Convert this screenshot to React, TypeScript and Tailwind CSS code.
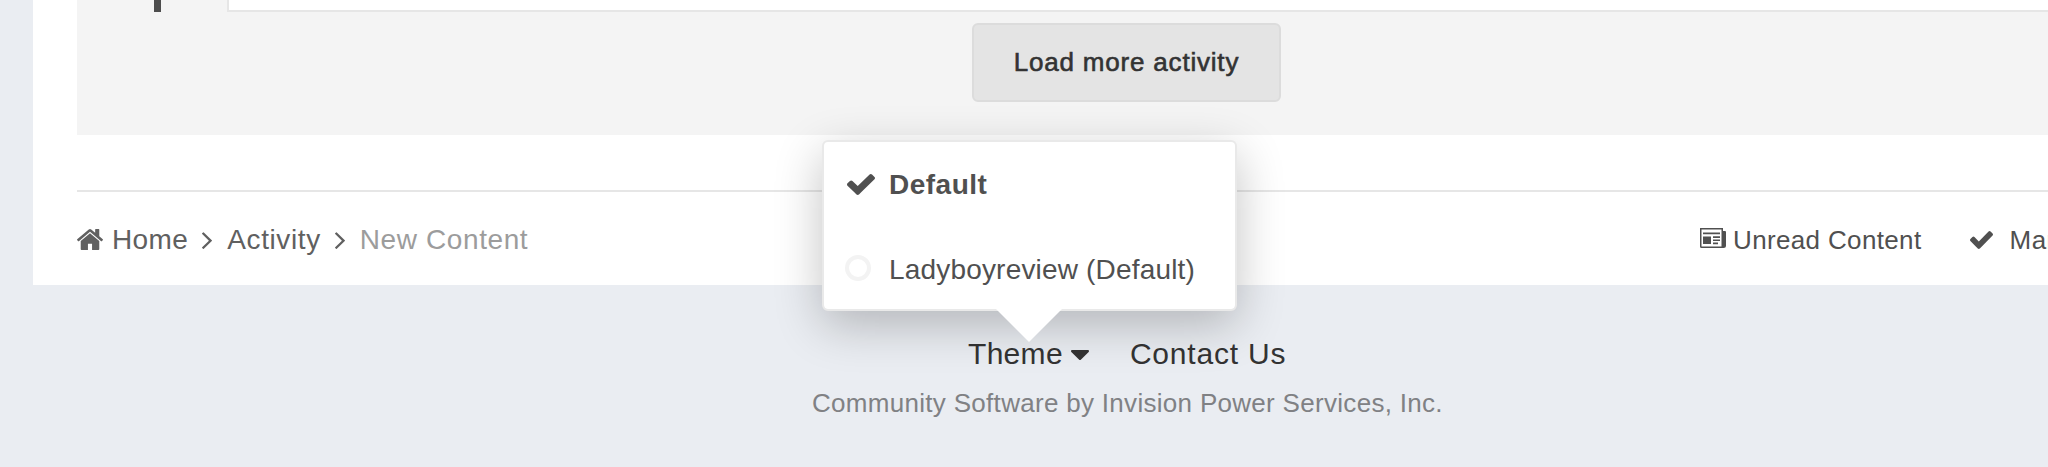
import React from "react";

const PATHS = {
  home: "M1472 992v480q0 26-19 45t-45 19h-384v-384h-256v384h-384q-26 0-45-19t-19-45v-480q0-1 .5-3t.5-3l575-474 575 474q1 2 1 6zm223-69l-62 74q-8 9-21 11h-3q-13 0-21-7l-692-577-692 577q-12 8-24 7-13-2-21-11l-62-74q-8-10-7-23.5t11-21.5l719-599q32-26 76-26t76 26l244 204v-195q0-14 9-23t23-9h192q14 0 23 9t9 23v408l219 182q10 8 11 21.5t-7 23.5z",
  check: "M1671 566q0 40-28 68l-724 724-136 136q-28 28-68 28t-68-28l-136-136-362-362q-28-28-28-68t28-68l136-136q28-28 68-28t68 28l294 295 656-657q28-28 68-28t68 28l136 136q28 28 28 68z",
  caret: "M1408 704q0 26-19 45l-448 448q-19 19-45 19t-45-19l-448-448q-19-19-19-45t19-45 45-19h896q26 0 45 19t19 45z",
  angle: "M1171 960q0 13-10 23l-466 466q-10 10-23 10t-23-10l-50-50q-10-10-10-23t10-23l393-393-393-393q-10-10-10-23t10-23l50-50q10-10 23-10t23 10l466 466q10 10 10 23z",
};

function Icon({ name, box, className }: { name: keyof typeof PATHS; box: string; className: string }) {
  return (
    <svg viewBox={box} fill="currentColor" preserveAspectRatio="none" className={`shrink-0 ${className}`}>
      <path d={PATHS[name]} />
    </svg>
  );
}

function NewsIcon() {
  return (
    <svg viewBox="0 0 26 20" fill="currentColor" className="mt-2 h-5 w-[26px] shrink-0">
      <path fillRule="evenodd" d="M0 0h23v20H1.500Q0 20 0 18.500zM1.500 1.500v17h20v-17z" />
      <path d="M23 3h2q1 0 1 1v13.500q0 2.500-2.500 2.500H22V3zM3 4.500h17v1.700H3zM3 8.500h8v7.500H3zM13 8.200h7v1.700h-7zM13 11.400h7v1.700h-7zM13 14.600h5v1.700h-5z" />
    </svg>
  );
}

function ThemeMenu() {
  return (
    <div className="absolute left-[822px] top-[140px] z-10 h-[171px] w-[415px] rounded-md border-2 border-[#e9e9e9] bg-white bg-clip-padding text-[28px] leading-10 text-[#505050] shadow-[0_14px_48px_rgba(0,0,0,0.24)]">
      <div className="flex pt-[23px] pl-[23px]">
        <Icon name="check" box="121 334 1550 1188" className="mt-[9px] h-[21px] w-7" />
        <span className="pl-[14px] font-bold tracking-[0.5px]">Default</span>
      </div>
      <div className="flex pt-11 pl-[21px]">
        <span className="mt-[6px] size-[26px] shrink-0 rounded-full border-4 border-[#f3f3f3]" />
        <span className="whitespace-nowrap pl-[18px] pt-px tracking-[0.18px]">Ladyboyreview (Default)</span>
      </div>
      <svg viewBox="0 0 66 33" className="absolute left-[172px] top-[167px] h-[33px] w-[66px]">
        <path d="M0 0h66L33 33z" fill="#fff" />
      </svg>
    </div>
  );
}

export default function App() {
  return (
    <div className="relative h-[467px] w-full overflow-hidden bg-[#eaedf2] font-['Liberation_Sans',Arial,sans-serif]">
      <main className="ml-[33px] h-[285px] bg-white pl-11">
        <section className="h-[135px] bg-[#f4f4f4]">
          <div className="flex h-3">
            <div className="ml-[77px] h-3 w-[7px] bg-[#4d4d4d]" />
            <div className="ml-[66px] h-3 grow border-b-2 border-l-2 border-[#e6e6e6] bg-white" />
          </div>
          <button className="mt-[11px] ml-[895px] block h-[79px] w-[309px] rounded-md border-2 border-[#dcdcdc] bg-[#e4e4e4] pb-px text-[26px] leading-10 tracking-[0.8px] text-[#333] [-webkit-text-stroke:0.6px_#333]">
            Load more activity
          </button>
        </section>
        <div className="mt-[55px] flex h-[95px] border-t-2 border-[#e6e6e6] pt-[27px] leading-10">
          <nav className="flex text-[28px] text-[#606060]">
            <Icon name="home" box="89 253 1614 1283" className="mt-[10px] h-[21px] w-[26px]" />
            <span className="pl-[9px] pt-px tracking-[0.4px]">Home</span>
            <Icon name="angle" box="589 445 582 1014" className="ml-[14px] mt-[13px] h-[17px] w-[10px]" />
            <span className="pl-[15px] pt-px tracking-[0.6px]">Activity</span>
            <Icon name="angle" box="589 445 582 1014" className="ml-[14px] mt-[13px] h-[17px] w-[10px]" />
            <span className="whitespace-nowrap pl-[15px] pt-px tracking-[0.6px] text-[#9c9c9c]">New Content</span>
          </nav>
          <div className="ml-auto flex w-[348px] shrink-0 overflow-hidden pt-px text-[26px] text-[#505050]">
            <NewsIcon />
            <span className="whitespace-nowrap pl-[7px] tracking-[0.35px]">Unread Content</span>
            <Icon name="check" box="121 334 1550 1188" className="ml-[49px] mt-[11px] h-[18px] w-[23px]" />
            <span className="whitespace-nowrap pl-4 tracking-[0.5px]">Mar</span>
          </div>
        </div>
      </main>
      <footer className="pt-[49px]">
        <div className="ml-[968px] flex text-[30px] leading-10 text-[#333]">
          <span className="tracking-[0.3px]">Theme</span>
          <Icon name="caret" box="384 640 1024 576" className="ml-[8px] mt-[16px] h-[10px] w-[18px]" />
          <span className="pl-[41px] tracking-[0.8px]">Contact Us</span>
        </div>
        <p className="ml-[812px] mt-[9px] text-[26px] leading-10 tracking-[0.3px] text-[#808184]">
          Community Software by Invision Power Services, Inc.
        </p>
      </footer>
      <ThemeMenu />
    </div>
  );
}
